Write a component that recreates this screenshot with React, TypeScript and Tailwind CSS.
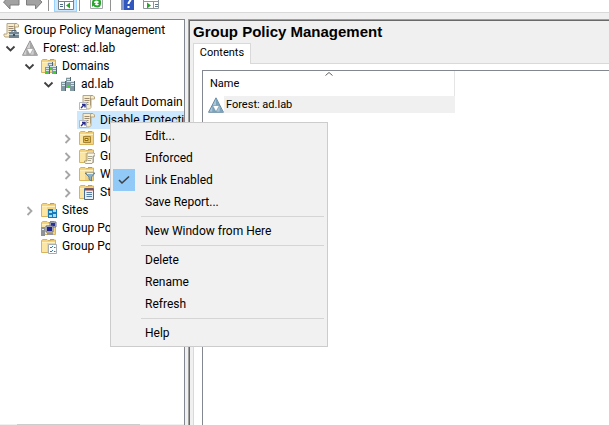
import type { ReactNode } from "react";

const FONT = "font-[Roboto,'Open_Sans',sans-serif]";

type IconName =
  | "console" | "forest" | "domains" | "domain" | "gpo" | "ou"
  | "gpoFolder" | "wmi" | "starter" | "sites" | "modeling" | "results";

function Folder() {
  return (
    <>
      <path d="M.5 2.500 2 1.500h4l1 1h3V2h4.500v12.500H.5z" fill="#f3d483" stroke="#d9b45e" />
      <path d="M1 4h5v10H1z" fill="#fbe6a4" />
      <path d="M9 1.500h4" stroke="#6caed6" />
      <path d="M1 4.500h13" stroke="#fff0bd" />
    </>
  );
}

function Server({ x, y, h = 9 }: { x: number; y: number; h?: number }) {
  return (
    <g>
      <rect x={x} y={y} width="5" height={h} fill="#8299a4" />
      <path d={`M${x} ${y + 0.5}h5M${x + 1} ${y + 2.5}h3M${x + 1} ${y + 4.5}h3`} stroke="#d9e5ea" />
      <path d={`M${x + 4.5} ${y}v${h}`} stroke="#526873" />
      <rect x={x + 1} y={y + h - 2} width="2" height="1" fill="#35dc22" />
    </g>
  );
}

function Scroll() {
  return (
    <>
      <path d="M4 1.500h10l1.500 1.500v2H12v8.500L10.500 15H2l-1-1.500V12h3z" fill="#f8edcb" stroke="#b5a684" />
      <path d="M13 1.500c-1.500 0-1.500 1-1.500 2v8" stroke="#a89875" fill="none" />
      <path d="M5.500 4.500h5M5.500 6.500h5M5.500 8.500h4M5.500 10.500h4" stroke="#9d8b72" />
    </>
  );
}

function Triangles({ blue = false }: { blue?: boolean }) {
  const light = blue ? "#a9c6d8" : "#cfcfcf";
  const mid = blue ? "#7ba3bc" : "#a6a6a6";
  const dark = blue ? "#4d7590" : "#808080";
  return (
    <>
      <path d="M8 .8 15.500 15.300H.5z" fill={light} stroke={dark} strokeWidth=".8" />
      <path d="M8 1v7.500h4zM4.300 8.500V15H8zM11.700 8.500V15H15z" fill={mid} />
      <path d="M4.600 8.500h6.800L8 14.800z" fill="#fff" stroke={dark} strokeWidth=".5" />
    </>
  );
}

const DRAWINGS: Record<IconName, ReactNode> = {
  console: (
    <>
      <Scroll />
      <rect x="6" y="10" width="10" height="6" fill="#718593" />
      <path d="M9 10V8.500h4V10" fill="none" stroke="#526572" />
      <path d="M6 12.500h10" stroke="#b9cbd5" />
      <path d="M10 12h2v2h-2z" fill="#3c505d" />
    </>
  ),
  forest: <Triangles />,
  domains: (
    <>
      <Folder />
      <Server x={7} y={4} h={8} />
      <Server x={4} y={8} h={8} />
      <Server x={11} y={8} h={8} />
    </>
  ),
  domain: (
    <>
      <Server x={6} y={1} h={11} />
      <Server x={1} y={5} h={10} />
      <Server x={10} y={5} h={10} />
    </>
  ),
  gpo: (
    <>
      <Scroll />
      <path d="M.5 8.500h7v7h-7z" fill="#fff" stroke="#b5b8c1" />
      <path d="M2 14 5.500 10.500M3 10.500h3v3" fill="none" stroke="#292d87" strokeWidth="1.400" />
    </>
  ),
  ou: (
    <>
      <Folder />
      <path d="M4.500 6.500h7v6h-7z" fill="#e6bd4c" stroke="#a68532" />
      <path d="M6 8.500h3v2H6z" fill="#fff0a6" stroke="#8c6a18" />
    </>
  ),
  gpoFolder: (
    <>
      <Folder />
      <path d="M8 5h7l1 1v2h-2v6l-1 1.500H6.500l-1-1.500v-1H8z" fill="#faf6e6" stroke="#8f8b7c" strokeWidth=".8" />
      <path d="M9 8.500h4M9 10.500h4M9 12.500h3" stroke="#aaa58f" />
    </>
  ),
  wmi: (
    <>
      <Folder />
      <path d="M6 7h10l-3.500 4v4L10 13.500V11z" fill="#8fb2cb" stroke="#53748d" strokeWidth=".8" />
      <path d="M8 7.500h6" stroke="#e4f1f8" />
    </>
  ),
  starter: (
    <>
      <Folder />
      <path d="M5.500 4.500h9v11h-9z" fill="#e9eff6" stroke="#466a93" />
      <path d="M6 5.500h8" stroke="#a34432" strokeWidth="2" />
      <path d="M7.500 8.500H13M7.500 10.500H13M7.500 12.500H13" stroke="#597fa5" />
    </>
  ),
  sites: (
    <>
      <Folder />
      <path d="M7 7h9v9H7z" fill="#1879b9" />
      <path d="M8 9h3v2H8zM12 7h3v3h-3zM8 13h3v2H8zM12 12h3v3h-3z" fill="#a5dcfa" />
    </>
  ),
  modeling: (
    <>
      <Folder />
      <path d="M9 2h6v5H9z" fill="#c8cbdc" stroke="#6f7287" />
      <path d="M10 3h4v3h-4z" fill="#2b3094" />
      <path d="M5 6h7v6H5z" fill="#d2d5e2" stroke="#686b80" />
      <path d="M6 7h5v4H6z" fill="#1c2193" />
      <path d="M6 13h6v2H6z" fill="#9093a5" />
      <rect x="0" y="7" width="4" height="9" fill="#8c9295" />
      <path d="M1 9.500h2" stroke="#e8eaea" />
      <path d="M1 13.500h2" stroke="#3fd72b" />
    </>
  ),
  results: (
    <>
      <Folder />
      <path d="M7.500 6.500h8v9h-8z" fill="#fff" stroke="#a5adb5" />
      <path d="m9 9 1 1 2-2M9 13l1 1 2-2M13 9.500h1.500M13 13.500h1.500" stroke="#3979af" fill="none" />
    </>
  ),
};

function Icon({ name }: { name: IconName }) {
  return <svg className="size-4 shrink-0" viewBox="0 0 16 16" aria-hidden="true">{DRAWINGS[name]}</svg>;
}

interface Node { label: string; icon: IconName; indent: string; open?: boolean; selected?: boolean }

const NODES: Node[] = [
  { label: "Forest: ad.lab", icon: "forest", indent: "pl-[3px]", open: true },
  { label: "Domains", icon: "domains", indent: "pl-[22px]", open: true },
  { label: "ad.lab", icon: "domain", indent: "pl-[41px]", open: true },
  { label: "Default Domain Policy", icon: "gpo", indent: "pl-[60px]" },
  { label: "Disable Protections", icon: "gpo", indent: "pl-[60px]", selected: true },
  { label: "Domain Controllers", icon: "ou", indent: "pl-[60px]", open: false },
  { label: "Group Policy Objects", icon: "gpoFolder", indent: "pl-[60px]", open: false },
  { label: "WMI Filters", icon: "wmi", indent: "pl-[60px]", open: false },
  { label: "Starter GPOs", icon: "starter", indent: "pl-[60px]", open: false },
  { label: "Sites", icon: "sites", indent: "pl-[22px]", open: false },
  { label: "Group Policy Modeling", icon: "modeling", indent: "pl-[22px]" },
  { label: "Group Policy Results", icon: "results", indent: "pl-[22px]" },
];

function TreeRow({ node }: { node: Node }) {
  return (
    <li className={`flex h-[18px] items-center gap-px ${node.indent}`}>
      {node.open === undefined ? (
        <span className="w-4 shrink-0" />
      ) : (
        <button className="size-4 shrink-0" aria-label={`Toggle ${node.label}`} aria-expanded={node.open}>
          <svg className="size-4" viewBox="0 0 16 16" fill="none" strokeWidth="1.800">
            {node.open
              ? <path d="m3.500 6.500 4 4 4-4" stroke="#404040" />
              : <path d="m5.500 5 4 4-4 4" stroke="#a6a6a6" />}
          </svg>
        </button>
      )}
      <button className={`flex h-[18px] min-w-0 grow items-center gap-[5px] overflow-hidden pl-[2px] whitespace-nowrap ${node.selected ? "bg-[#cce8ff]" : ""}`}>
        <Icon name={node.icon} />
        <span>{node.label}</span>
      </button>
    </li>
  );
}

function ToolButton({ label, active, children }: { label: string; active?: boolean; children: ReactNode }) {
  return (
    <button aria-label={label} className={`flex h-3 w-[23px] shrink-0 justify-center ${active ? "border-x border-b border-[#99d1ff] bg-[#cce8ff]" : ""}`}>
      <svg className="h-[11px] w-[18px] shrink-0" viewBox="0 0 18 11">{children}</svg>
    </button>
  );
}

function Divider() {
  return <span className="h-[11px] w-px shrink-0 bg-[#929292]" />;
}

function Toolbar() {
  return (
    <div className="flex h-3 shrink-0 overflow-hidden bg-white" role="toolbar" aria-label="Console">
      <ToolButton label="Back">
        <path d="M.5 2 7-4v3h9v6H7v4z" fill="#a2a2a2" stroke="#7d7d7d" />
      </ToolButton>
      <ToolButton label="Forward">
        <path d="M16 2 9.500-4v3h-9v6h9v4z" fill="#a2a2a2" stroke="#7d7d7d" />
      </ToolButton>
      <div className="flex gap-[5px] pl-[2px]">
        <Divider />
        <ToolButton label="Show or hide console tree" active>
          <path d="M1.500-4.500h15v14h-15z" fill="#fff" stroke="#78848d" />
          <path d="M1 1.500h16M7.500 2v8" stroke="#78848d" />
          <path d="M3 4.500h3M3 6.500h3" stroke="#526d83" />
          <path d="m9 5.500 4-3v6z" fill="#29a329" />
        </ToolButton>
      </div>
      <div className="flex gap-[5px] pl-[2px]">
        <Divider />
        <ToolButton label="Refresh">
          <path d="M2.500-4.500h12v13h-12z" fill="#fff" stroke="#a4a7aa" />
          <path d="M5 3c0-5 6-4 7-1M12 3c0 5-5 4-7 1" stroke="#27a52d" strokeWidth="2" fill="none" />
          <path d="M13 0v4H9zM4 7V3h4z" fill="#27a52d" />
        </ToolButton>
      </div>
      <div className="flex gap-[5px] pl-[2px]">
        <Divider />
        <ToolButton label="Help">
          <path d="M2-5h13v15H2z" fill="#3156bd" />
          <path d="M2-5h3v15H2z" fill="#8498cb" />
          <path d="M7.500 0c0-4 5-3 4 0-.5 2-2 1-2 4M9.500 6v2" fill="none" stroke="#fff" strokeWidth="2" />
        </ToolButton>
      </div>
      <ToolButton label="Show or hide action pane">
        <path d="M1.500-4.500h15v13h-15z" fill="#fff" stroke="#8d969c" />
        <path d="M1 1.500h16M11.500 2v7" stroke="#8d969c" />
        <path d="M13 4.500h3M13 6.500h3" stroke="#647a8c" />
        <path d="m5 2.500 4 3-4 3z" fill="#29a329" />
      </ToolButton>
    </div>
  );
}

const MENU = [
  ["Edit...", "Enforced", "Link Enabled", "Save Report..."],
  ["New Window from Here"],
  ["Delete", "Rename", "Refresh"],
  ["Help"],
];

function ContextMenu() {
  return (
    <div role="menu" className="absolute top-[122px] left-[110px] w-[218px] border border-[#cccccc] bg-[#f1f1f1] p-[2px]">
      {MENU.map((group, i) => (
        <div key={group[0]}>
          {i > 0 && <div role="separator" className="mr-px ml-7 h-[7px] border-t-[3px] border-[#f1f1f1]"><div className="h-px bg-[#d5d5d5]" /></div>}
          {group.map((label) => (
            <button key={label} role="menuitem" className="flex h-[22px] w-full items-center gap-[10px] text-left">
              <span className={`flex size-[22px] items-center justify-center ${label === "Link Enabled" ? "bg-[#91c9f7]" : ""}`}>
                {label === "Link Enabled" && (
                  <svg className="size-3" viewBox="0 0 12 12"><path d="m1 6 3 3 7-6.500" fill="none" stroke="#3c4247" strokeWidth="1.600" /></svg>
                )}
              </span>
              {label}
            </button>
          ))}
        </div>
      ))}
    </div>
  );
}

export default function App() {
  return (
    <div className={`relative flex h-screen flex-col overflow-hidden bg-[#f0f0f0] text-[12px] text-black ${FONT}`}>
      <Toolbar />
      <div className="h-[7px] shrink-0 border-t border-[#d9d9d9]" />
      <main className="flex min-h-0 grow gap-[3px]">
        <nav className="flex w-[185px] shrink-0 flex-col overflow-hidden border-t border-r border-[#828790] bg-white pt-px" aria-label="Console tree">
          <button className="flex h-[18px] items-center gap-[5px] pl-[3px] whitespace-nowrap">
            <Icon name="console" />
            Group Policy Management
          </button>
          <ul>{NODES.map((node) => <TreeRow key={node.label} node={node} />)}</ul>
          <div className="mt-auto h-px shrink-0 bg-[#f0f0f0] pr-11 pl-[17px]"><div className="h-px bg-[#cdcdcd]" /></div>
        </nav>
        <section className="flex min-w-0 grow flex-col border-t border-l border-[#a0a0a0]">
          <div className="flex min-h-0 grow flex-col border-t border-l border-[#696969] pl-[3px]">
            <h1 className="h-[22px] font-['Liberation_Sans',Arial,sans-serif] text-[15px] leading-[22px] font-bold">Group Policy Management</h1>
            <div className="flex h-[21px] shrink-0" role="tablist">
              <button role="tab" aria-selected="true" className="w-[58px] border-x border-t border-[#d9d9d9] bg-white pb-[2px] text-[11px]">Contents</button>
              <span className="grow border-b border-[#d9d9d9]" />
            </div>
            <div className="flex min-h-0 grow flex-col border-l border-[#d9d9d9] bg-white pt-[6px] pl-2">
              <div className="grow border-t border-l border-[#828790] text-[11px]">
                <table className="w-[252px] table-fixed border-collapse">
                  <thead>
                    <tr>
                      <th className="h-[25px] border-r border-[#e5e5e5] p-0 text-left align-top font-normal">
                        <svg className="mx-auto h-[5px] w-2" viewBox="0 0 8 5"><path d="m.5 4.500 3.500-3 3.500 3" fill="none" stroke="#606060" /></svg>
                        <span className="block pl-[7px] leading-4">Name</span>
                      </th>
                    </tr>
                  </thead>
                  <tbody>
                    <tr>
                      <td className="p-0">
                        <button className="flex h-[17px] w-full items-center pl-[5px] text-left">
                          <svg className="size-4 shrink-0" viewBox="0 0 16 16" aria-hidden="true"><Triangles blue /></svg>
                          <span className="h-[17px] grow bg-[#f0f0f0] pl-[2px] leading-[17px]">Forest: ad.lab</span>
                        </button>
                      </td>
                    </tr>
                  </tbody>
                </table>
              </div>
            </div>
          </div>
        </section>
      </main>
      <ContextMenu />
    </div>
  );
}
